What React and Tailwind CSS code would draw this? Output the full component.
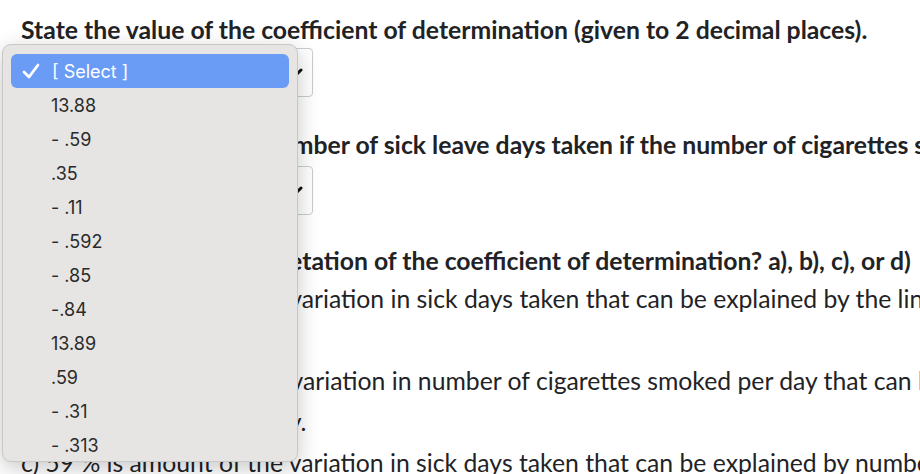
import React from 'react';

const options = ['13.88', '- .59', '.35', '- .11', '- .592', '- .85', '-.84', '13.89', '.59', '- .31', '- .313'];

const SelectBox = () => (
  <div className="relative h-[49px] w-[292px] rounded-[4px] border border-[#c7cdd1] bg-white">
    <svg className="absolute right-[9px] top-[18px] h-[12px] w-[16px]" viewBox="0 0 16 12">
      <path d="M2 3 L8 9 L14 3" fill="none" stroke="#111" strokeWidth="3" strokeLinecap="round" />
    </svg>
  </div>
);

const Dropdown = () => (
  <div
    className="absolute left-[2px] top-[44px] w-[296px] h-[418px] rounded-[9px] border border-[#c9c8c6] bg-[#e6e5e3] px-[8px] pt-[9px]"
    style={{ fontFamily: 'Inter, "Liberation Sans", sans-serif', boxShadow: '0 6px 22px rgba(0,0,0,0.22)' }}
  >
    <div className="flex h-[34px] items-center rounded-[6px] bg-[#6a9cf6] text-white text-[18px]">
      <svg className="ml-[11px] mr-[12px] h-[18px] w-[18px]" viewBox="0 0 18 18">
        <path d="M2 10 L7 15 L16 3" fill="none" stroke="#fff" strokeWidth="2.8" strokeLinecap="round" strokeLinejoin="round" />
      </svg>
      <span>[ Select ]</span>
    </div>
    {options.map((o, i) => (
      <div key={i} className="flex h-[34.1px] items-center pl-[40px] text-[18px] text-[#2a2a2a]">
        {o}
      </div>
    ))}
  </div>
);

export default function App() {
  return (
    <div className="relative h-[474px] w-[920px] overflow-hidden bg-white">
      <div
        className="pl-[21px] pt-[15px] text-[24.75px] text-[#1f2326] whitespace-nowrap"
        style={{ fontFamily: 'Lato, "Open Sans", sans-serif' }}
      >
        <p className="font-bold leading-[30px]">
          State the value of the coefficient of determination (given to 2 decimal places).
        </p>
        <div className="mt-[3px]">
          <SelectBox />
        </div>
        <p className="mt-[33px] font-bold leading-[30px]">
          What is the predicted number of sick leave days taken if the number of cigarettes smoked per day is 20?
        </p>
        <div className="mt-[6px]">
          <SelectBox />
        </div>
        <p className="mt-[31px] font-bold leading-[30px]">
          What is a correct interpretation of the coefficient of determination? a), b), c), or d)
        </p>
        <div className="mt-[2px] leading-[41px]">
          <p>a) 35 % is amount of the variation in sick days taken that can be explained by the linear relationship</p>
          <p>with cigarettes.</p>
          <p>b) 35 % is amount of the variation in number of cigarettes smoked per day that can be explained</p>
          <p>by the number of sick-day.</p>
          <p>c) 59 % is amount of the variation in sick days taken that can be explained by number of cigarettes</p>
        </div>
      </div>
      <Dropdown />
    </div>
  );
}
